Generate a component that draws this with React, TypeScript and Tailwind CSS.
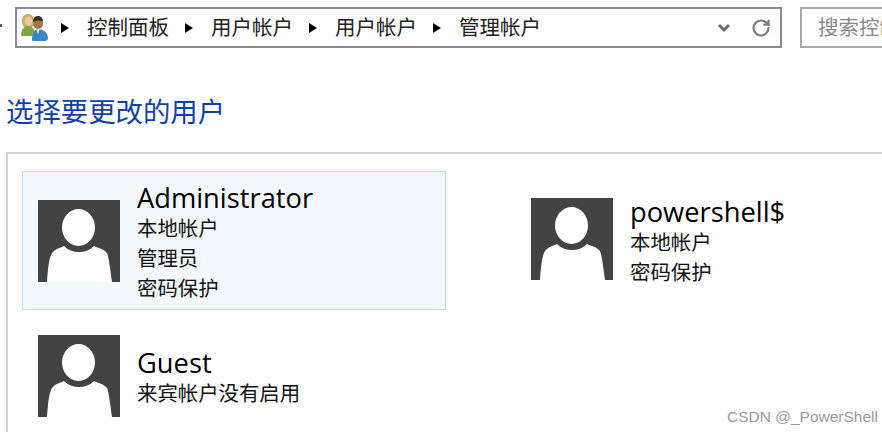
import { RotateCw } from "lucide-react";

const font = { fontFamily: '"Open Sans", "Noto Sans CJK SC", sans-serif' };

function Arrow() {
  return <span className="w-0 h-0 border-y-[5.5px] border-y-transparent border-l-[8px] border-l-black" />;
}

function UsersIcon() {
  return (
    <svg width="28" height="29" viewBox="0 0 28 29" className="shrink-0">
      <path d="M1 8C1 3 4 1 7 1s6 2 6 7c0 3-1 5-2 6H3C2 13 1 11 1 8z" fill="#c8ad62" />
      <ellipse cx="7.5" cy="8" rx="3.8" ry="4.8" fill="#e9c8a8" />
      <path d="M0 22c0-5 3-9 7-9s7 3 7 8v2H1c-1 0-1 0-1-1z" fill="#7da64a" />
      <circle cx="17" cy="11" r="5" fill="#a9714c" />
      <path d="M12 9c0-4 2-6 5-6s5 2 5 6c-2-2-6-2-10 0z" fill="#3e3026" />
      <path d="M11 27c0-6 2-11 6-11s10 3 10 9c0 2-1 3-3 3H13c-1 0-2 0-2-1z" fill="#3f86c8" />
      <path d="M15 16l2 5 2-5z" fill="#d9ecf8" />
    </svg>
  );
}

function Avatar({ className }: { className: string }) {
  return (
    <svg width="82" height="82" viewBox="0 0 82 82" className={`shrink-0 ${className}`}>
      <rect width="82" height="82" fill="#434343" />
      <path d="M9 82 C10 68 11 58 14 53 C17 49 22 48 26 46 C30 50 35 52 41 52 C47 52 52 50 56 46 C60 48 66 49 69 53 C71 58 72 68 74 82 Z" fill="#fff" />
      <ellipse cx="40.5" cy="27.5" rx="16.5" ry="18.5" fill="#fff" />
    </svg>
  );
}

function Account({
  name,
  lines,
  selected,
  avatarClass,
  textClass,
}: {
  name: string;
  lines: string[];
  selected?: boolean;
  avatarClass: string;
  textClass: string;
}) {
  return (
    <div className={`flex items-start gap-[17px] pl-[15px] border h-[139px] ${selected ? "bg-[#f4f9ff] border-[#bcdcfa]" : "border-transparent"}`}>
      <Avatar className={avatarClass} />
      <div className={`flex flex-col text-[20.4px] leading-[30px] text-[#111] ${textClass}`}>
        <div className="text-[27.3px] leading-[31px] text-black">{name}</div>
        {lines.map((l) => (
          <div key={l}>{l}</div>
        ))}
      </div>
    </div>
  );
}

export default function App() {
  return (
    <div className="relative w-[882px] h-[432px] overflow-hidden bg-white" style={font}>
      <div className="flex items-start pt-[7px] pl-[15px] gap-[18px] w-[1000px]">
        <div className="flex items-center w-[767px] h-[41px] border-2 border-[#8a8a8a] pl-[4px] pr-[9px] text-[20.5px] text-[#222]">
          <UsersIcon />
          <div className="flex items-center gap-[17px] ml-[12px] flex-1">
            <Arrow />
            <span className="ml-px -mr-px">控制面板</span>
            <Arrow />
            <span className="ml-px -mr-px">用户帐户</span>
            <Arrow />
            <span className="ml-px -mr-px">用户帐户</span>
            <Arrow />
            <span className="ml-px -mr-px">管理帐户</span>
          </div>
          <svg width="14" height="10" viewBox="0 0 14 10" className="mr-[20px]">
            <path d="M2 2l5 5 5-5" fill="none" stroke="#6b6b6b" strokeWidth="3" />
          </svg>
          <RotateCw size={20} strokeWidth={2.6} color="#7a7a7a" />
        </div>
        <div className="w-[200px] h-[41px] border-2 border-[#a8a8a8] pl-[16px] text-[20.5px] leading-[37px] text-[#8a8a8a]">搜索控制面板</div>
      </div>

      <h1 className="mt-[44px] ml-[6px] text-[27.4px] leading-[40px] font-normal text-[#0f3fa8]">选择要更改的用户</h1>

      <div className="mt-[20px] ml-[6px] w-[950px] h-[300px] border-2 border-[#d4d4d4] pt-[17px] pl-[14px]">
        <div className="grid grid-cols-[424px_424px] gap-x-[69px]">
          <Account name="Administrator" lines={["本地帐户", "管理员", "密码保护"]} selected avatarClass="mt-[28px]" textClass="mt-[10px]" />
          <Account name="powershell$" lines={["本地帐户", "密码保护"]} avatarClass="mt-[26px]" textClass="mt-[24px]" />
          <Account name="Guest" lines={["来宾帐户没有启用"]} avatarClass="mt-[24px]" textClass="mt-[36px]" />
        </div>
      </div>

      <div className="absolute left-[727px] top-[407px] text-[15.5px] leading-[20px] text-[#9a9a9a]" style={{ fontFamily: '"Liberation Sans", sans-serif' }}>
        CSDN @_PowerShell
      </div>
      <div className="absolute left-0 top-[24px] w-[2px] h-[3px] bg-[#555]" />
    </div>
  );
}
